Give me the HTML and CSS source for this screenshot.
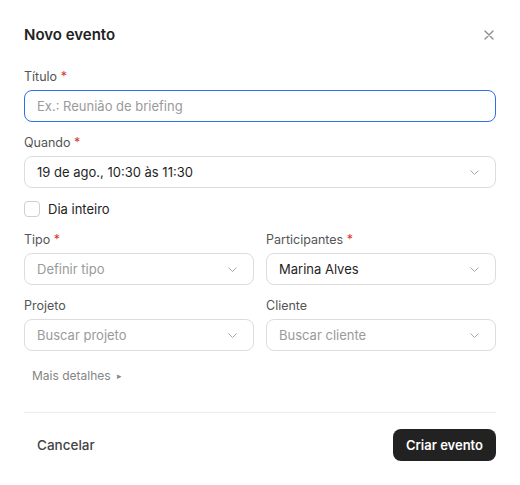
FILE: index.html
```html
<!DOCTYPE html>
<html lang="pt-BR">
<head>
    <meta charset="UTF-8">
    <meta name="viewport" content="width=device-width, initial-scale=1.0">
    <title>Novo evento</title>
    <link rel="stylesheet" href="styles.css">
</head>
<body>
    <div class="modal">
        <div class="modal-header">
            <h2 class="modal-title">Novo evento</h2>
            <button class="close-btn" aria-label="Fechar">
                <svg width="10" height="10" viewBox="0 0 10 10">
                    <path d="M1 1 L9 9 M9 1 L1 9" stroke="#8a8a8a" stroke-width="1.3" stroke-linecap="round" fill="none"/>
                </svg>
            </button>
        </div>

        <div class="field">
            <label class="label">Título <span class="req">*</span></label>
            <input class="input focused" type="text" placeholder="Ex.: Reunião de briefing">
        </div>

        <div class="field">
            <label class="label">Quando <span class="req">*</span></label>
            <div class="select">
                <span class="value">19 de ago., 10:30 às 11:30</span>
                <svg class="chevron" width="9" height="5" viewBox="0 0 9 5"><path d="M0.5 0.5 L4.5 4.5 L8.5 0.5" stroke="#a8a8a8" stroke-width="1" fill="none"/></svg>
            </div>
        </div>

        <label class="check-row">
            <span class="checkbox"></span>
            <span>Dia inteiro</span>
        </label>

        <div class="grid">
            <div class="field">
                <label class="label">Tipo <span class="req">*</span></label>
                <div class="select">
                    <span class="placeholder">Definir tipo</span>
                    <svg class="chevron" width="9" height="5" viewBox="0 0 9 5"><path d="M0.5 0.5 L4.5 4.5 L8.5 0.5" stroke="#a8a8a8" stroke-width="1" fill="none"/></svg>
                </div>
            </div>
            <div class="field">
                <label class="label">Participantes <span class="req">*</span></label>
                <div class="select">
                    <span class="value">Marina Alves</span>
                    <svg class="chevron" width="9" height="5" viewBox="0 0 9 5"><path d="M0.5 0.5 L4.5 4.5 L8.5 0.5" stroke="#a8a8a8" stroke-width="1" fill="none"/></svg>
                </div>
            </div>
            <div class="field">
                <label class="label">Projeto</label>
                <div class="select">
                    <span class="placeholder">Buscar projeto</span>
                    <svg class="chevron" width="9" height="5" viewBox="0 0 9 5"><path d="M0.5 0.5 L4.5 4.5 L8.5 0.5" stroke="#a8a8a8" stroke-width="1" fill="none"/></svg>
                </div>
            </div>
            <div class="field">
                <label class="label">Cliente</label>
                <div class="select">
                    <span class="placeholder">Buscar cliente</span>
                    <svg class="chevron" width="9" height="5" viewBox="0 0 9 5"><path d="M0.5 0.5 L4.5 4.5 L8.5 0.5" stroke="#a8a8a8" stroke-width="1" fill="none"/></svg>
                </div>
            </div>
        </div>

        <button class="more-btn">Mais detalhes <span class="tri">&#9656;</span></button>

        <div class="footer">
            <button class="btn-ghost">Cancelar</button>
            <button class="btn-primary">Criar evento</button>
        </div>
    </div>
</body>
</html>
```

FILE: styles.css
```css
* {
	box-sizing: border-box;
}

body {
	margin: 0;
	background: #ffffff;
	font-family: "Inter", "Liberation Sans", sans-serif;
	color: #1f1f1f;
}

.modal {
	width: 520px;
	padding: 25px 24px 25px;
}

.modal-header {
	display: flex;
	align-items: center;
	justify-content: space-between;
	height: 20px;
	margin-bottom: 24px;
}

.modal-title {
	margin: 0;
	font-size: 15px;
	font-weight: 600;
	line-height: 20px;
	color: #222;
}

.close-btn {
	border: none;
	background: none;
	padding: 0;
	width: 10px;
	height: 10px;
	margin-right: 2px;
	display: flex;
}

.field {
	display: flex;
	flex-direction: column;
	gap: 5px;
	margin-bottom: 13px;
}

.label {
	font-size: 12.5px;
	line-height: 16px;
	color: #555;
}

.req {
	color: #d9342b;
}

.input,
.select {
	height: 32px;
	border: 1px solid #dcdcdc;
	border-radius: 8px;
	padding: 0 12px;
	font-family: inherit;
	font-size: 13px;
	color: #1f1f1f;
	background: #fff;
	outline: none;
	width: 100%;
}

.input.focused {
	border-color: #2f6fe8;
}

.input::placeholder {
	color: #9a9a9a;
}

.select {
	display: flex;
	align-items: center;
	justify-content: space-between;
	padding-right: 16px;
}

.placeholder {
	color: #9a9a9a;
}

.value {
	color: #1f1f1f;
}

.check-row {
	display: flex;
	align-items: center;
	gap: 8px;
	font-size: 13px;
	color: #222;
	height: 16px;
	margin-bottom: 15px;
}

.checkbox {
	width: 16px;
	height: 16px;
	border: 1px solid #cfcfcf;
	border-radius: 4px;
}

.grid {
	display: grid;
	grid-template-columns: 1fr 1fr;
	column-gap: 12px;
}

.more-btn {
	border: none;
	background: none;
	font-family: inherit;
	font-size: 12px;
	color: #858585;
	padding: 4px 8px;
	line-height: 16px;
	display: flex;
	align-items: center;
	gap: 6px;
}

.tri {
	font-size: 9px;
	color: #8a8a8a;
}

.footer {
	margin-top: 24px;
	border-top: 1px solid #ececec;
	padding-top: 16px;
	display: flex;
	justify-content: space-between;
	align-items: center;
}

.btn-ghost {
	border: none;
	background: none;
	font-family: inherit;
	font-size: 13.5px;
	font-weight: 500;
	color: #444;
	height: 32px;
	padding: 0 13px;
}

.btn-primary {
	border: none;
	background: #222222;
	color: #fff;
	font-family: inherit;
	font-size: 13px;
	font-weight: 600;
	height: 32px;
	padding: 0 13px;
	border-radius: 8px;
}
```
